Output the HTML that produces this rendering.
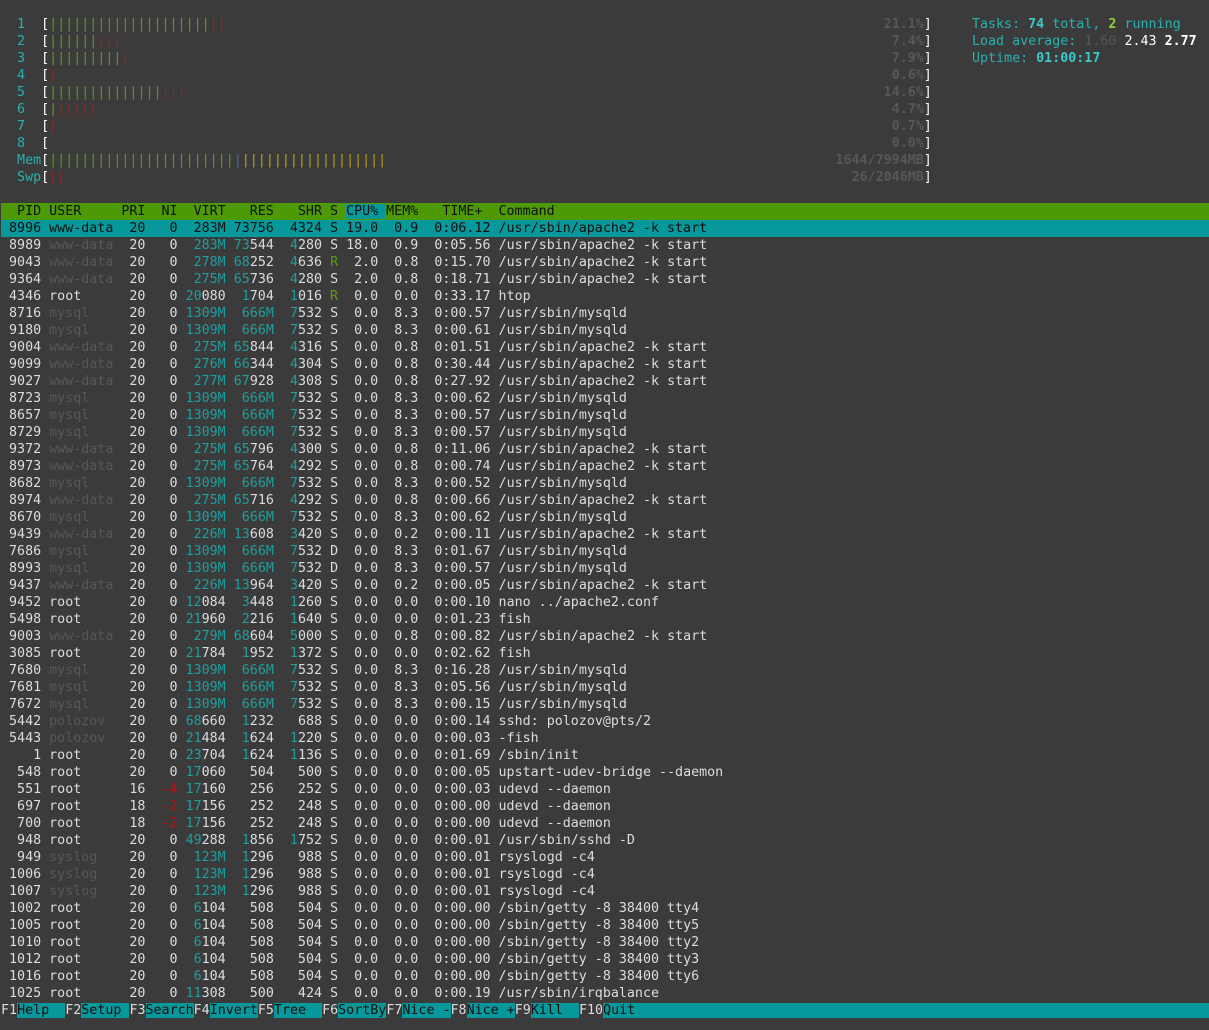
<!DOCTYPE html>
<html><head><meta charset="utf-8">
<style>
html,body{margin:0;padding:0;background:#3b3b3b;width:1209px;height:1030px;overflow:hidden}
#t{position:absolute;left:1px;top:16px;font-family:"DejaVu Sans Mono","Liberation Mono",monospace;font-size:13.33px;line-height:17px;color:#dcdcdc;width:1208px;overflow:hidden}
.l{white-space:pre;height:17px;overflow:hidden}
.c{color:#1f9e9e}.d{color:#575757}.r{color:#c01010}.g{color:#5c9a12}.y{color:#b8a020}.b{color:#3a6ea8}
.w{color:#fff}.bw{color:#fff;font-weight:bold}
.bar{display:inline-block;width:109ch;position:relative;vertical-align:top}
.pct{position:absolute;right:0;top:0;color:#575757;font-weight:bold}
.hd{background:#4e9a06;color:#111;margin-left:-1px;padding-left:1px}
.hd .cp{background:#06989a}
.sel{background:#06989a;color:#111;margin-left:-1px;padding-left:1px}
.ft{margin-left:-1px;padding-left:1px}
.fk{background:#06989a;color:#111}
.ck{color:#2ab0b0}.ckb{color:#3cc8c8;font-weight:bold}.gb{color:#8ad234;font-weight:bold}
</style></head><body>
<div id="t">
<div class="l"><span class="ck">  1</span>  <span class="w">[</span><span class="bar"><span class="g">||||||||||||||||||||</span><span class="r">||</span><span class="pct">21.1%</span></span><span class="w">]</span>     <span class="ck">Tasks: </span><span class="ckb">74</span><span class="ck"> total, </span><span class="gb">2</span><span class="ck"> running</span></div>
<div class="l"><span class="ck">  2</span>  <span class="w">[</span><span class="bar"><span class="g">||||||</span><span class="r">|||</span><span class="pct">7.4%</span></span><span class="w">]</span>     <span class="ck">Load average: </span><span class="d">1.60</span> <span class="w">2.43</span> <span class="bw">2.77</span></div>
<div class="l"><span class="ck">  3</span>  <span class="w">[</span><span class="bar"><span class="g">|||||||||</span><span class="r">|</span><span class="pct">7.9%</span></span><span class="w">]</span>     <span class="ck">Uptime: </span><span class="ckb">01:00:17</span></div>
<div class="l"><span class="ck">  4</span>  <span class="w">[</span><span class="bar"><span class="r">|</span><span class="pct">0.6%</span></span><span class="w">]</span></div>
<div class="l"><span class="ck">  5</span>  <span class="w">[</span><span class="bar"><span class="g">||||||||||||||</span><span class="r">|||</span><span class="pct">14.6%</span></span><span class="w">]</span></div>
<div class="l"><span class="ck">  6</span>  <span class="w">[</span><span class="bar"><span class="g">|</span><span class="r">|||||</span><span class="pct">4.7%</span></span><span class="w">]</span></div>
<div class="l"><span class="ck">  7</span>  <span class="w">[</span><span class="bar"><span class="r">|</span><span class="pct">0.7%</span></span><span class="w">]</span></div>
<div class="l"><span class="ck">  8</span>  <span class="w">[</span><span class="bar"><span class="pct">0.0%</span></span><span class="w">]</span></div>
<div class="l"><span class="ck">  Mem</span><span class="w">[</span><span class="bar"><span class="g">|||||||||||||||||||||||</span><span class="b">|</span><span class="y">||||||||||||||||||</span><span class="pct">1644/7994MB</span></span><span class="w">]</span></div>
<div class="l"><span class="ck">  Swp</span><span class="w">[</span><span class="bar"><span class="r">||</span><span class="pct">26/2046MB</span></span><span class="w">]</span></div>
<div class="l"> </div>
<div class="l hd">  PID USER     PRI  NI  VIRT   RES   SHR S <span class="cp">CPU% </span>MEM%   TIME+  Command</div>
<div class="l sel"> 8996 www-data  20   0  283M 73756  4324 S 19.0  0.9  0:06.12 /usr/sbin/apache2 -k start                                                                                                          </div>
<div class="l"> 8989 <span class="d">www-data</span>  20   0  <span class="c">283M</span> <span class="c">73</span>544  <span class="c">4</span>280 S 18.0  0.9  0:05.56 /usr/sbin/apache2 -k start</div>
<div class="l"> 9043 <span class="d">www-data</span>  20   0  <span class="c">278M</span> <span class="c">68</span>252  <span class="c">4</span>636 <span class="g">R</span>  2.0  0.8  0:15.70 /usr/sbin/apache2 -k start</div>
<div class="l"> 9364 <span class="d">www-data</span>  20   0  <span class="c">275M</span> <span class="c">65</span>736  <span class="c">4</span>280 S  2.0  0.8  0:18.71 /usr/sbin/apache2 -k start</div>
<div class="l"> 4346 root      20   0 <span class="c">20</span>080  <span class="c">1</span>704  <span class="c">1</span>016 <span class="g">R</span>  0.0  0.0  0:33.17 htop</div>
<div class="l"> 8716 <span class="d">mysql</span>     20   0 <span class="c">1309M</span>  <span class="c">666M</span>  <span class="c">7</span>532 S  0.0  8.3  0:00.57 /usr/sbin/mysqld</div>
<div class="l"> 9180 <span class="d">mysql</span>     20   0 <span class="c">1309M</span>  <span class="c">666M</span>  <span class="c">7</span>532 S  0.0  8.3  0:00.61 /usr/sbin/mysqld</div>
<div class="l"> 9004 <span class="d">www-data</span>  20   0  <span class="c">275M</span> <span class="c">65</span>844  <span class="c">4</span>316 S  0.0  0.8  0:01.51 /usr/sbin/apache2 -k start</div>
<div class="l"> 9099 <span class="d">www-data</span>  20   0  <span class="c">276M</span> <span class="c">66</span>344  <span class="c">4</span>304 S  0.0  0.8  0:30.44 /usr/sbin/apache2 -k start</div>
<div class="l"> 9027 <span class="d">www-data</span>  20   0  <span class="c">277M</span> <span class="c">67</span>928  <span class="c">4</span>308 S  0.0  0.8  0:27.92 /usr/sbin/apache2 -k start</div>
<div class="l"> 8723 <span class="d">mysql</span>     20   0 <span class="c">1309M</span>  <span class="c">666M</span>  <span class="c">7</span>532 S  0.0  8.3  0:00.62 /usr/sbin/mysqld</div>
<div class="l"> 8657 <span class="d">mysql</span>     20   0 <span class="c">1309M</span>  <span class="c">666M</span>  <span class="c">7</span>532 S  0.0  8.3  0:00.57 /usr/sbin/mysqld</div>
<div class="l"> 8729 <span class="d">mysql</span>     20   0 <span class="c">1309M</span>  <span class="c">666M</span>  <span class="c">7</span>532 S  0.0  8.3  0:00.57 /usr/sbin/mysqld</div>
<div class="l"> 9372 <span class="d">www-data</span>  20   0  <span class="c">275M</span> <span class="c">65</span>796  <span class="c">4</span>300 S  0.0  0.8  0:11.06 /usr/sbin/apache2 -k start</div>
<div class="l"> 8973 <span class="d">www-data</span>  20   0  <span class="c">275M</span> <span class="c">65</span>764  <span class="c">4</span>292 S  0.0  0.8  0:00.74 /usr/sbin/apache2 -k start</div>
<div class="l"> 8682 <span class="d">mysql</span>     20   0 <span class="c">1309M</span>  <span class="c">666M</span>  <span class="c">7</span>532 S  0.0  8.3  0:00.52 /usr/sbin/mysqld</div>
<div class="l"> 8974 <span class="d">www-data</span>  20   0  <span class="c">275M</span> <span class="c">65</span>716  <span class="c">4</span>292 S  0.0  0.8  0:00.66 /usr/sbin/apache2 -k start</div>
<div class="l"> 8670 <span class="d">mysql</span>     20   0 <span class="c">1309M</span>  <span class="c">666M</span>  <span class="c">7</span>532 S  0.0  8.3  0:00.62 /usr/sbin/mysqld</div>
<div class="l"> 9439 <span class="d">www-data</span>  20   0  <span class="c">226M</span> <span class="c">13</span>608  <span class="c">3</span>420 S  0.0  0.2  0:00.11 /usr/sbin/apache2 -k start</div>
<div class="l"> 7686 <span class="d">mysql</span>     20   0 <span class="c">1309M</span>  <span class="c">666M</span>  <span class="c">7</span>532 D  0.0  8.3  0:01.67 /usr/sbin/mysqld</div>
<div class="l"> 8993 <span class="d">mysql</span>     20   0 <span class="c">1309M</span>  <span class="c">666M</span>  <span class="c">7</span>532 D  0.0  8.3  0:00.57 /usr/sbin/mysqld</div>
<div class="l"> 9437 <span class="d">www-data</span>  20   0  <span class="c">226M</span> <span class="c">13</span>964  <span class="c">3</span>420 S  0.0  0.2  0:00.05 /usr/sbin/apache2 -k start</div>
<div class="l"> 9452 root      20   0 <span class="c">12</span>084  <span class="c">3</span>448  <span class="c">1</span>260 S  0.0  0.0  0:00.10 nano ../apache2.conf</div>
<div class="l"> 5498 root      20   0 <span class="c">21</span>960  <span class="c">2</span>216  <span class="c">1</span>640 S  0.0  0.0  0:01.23 fish</div>
<div class="l"> 9003 <span class="d">www-data</span>  20   0  <span class="c">279M</span> <span class="c">68</span>604  <span class="c">5</span>000 S  0.0  0.8  0:00.82 /usr/sbin/apache2 -k start</div>
<div class="l"> 3085 root      20   0 <span class="c">21</span>784  <span class="c">1</span>952  <span class="c">1</span>372 S  0.0  0.0  0:02.62 fish</div>
<div class="l"> 7680 <span class="d">mysql</span>     20   0 <span class="c">1309M</span>  <span class="c">666M</span>  <span class="c">7</span>532 S  0.0  8.3  0:16.28 /usr/sbin/mysqld</div>
<div class="l"> 7681 <span class="d">mysql</span>     20   0 <span class="c">1309M</span>  <span class="c">666M</span>  <span class="c">7</span>532 S  0.0  8.3  0:05.56 /usr/sbin/mysqld</div>
<div class="l"> 7672 <span class="d">mysql</span>     20   0 <span class="c">1309M</span>  <span class="c">666M</span>  <span class="c">7</span>532 S  0.0  8.3  0:00.15 /usr/sbin/mysqld</div>
<div class="l"> 5442 <span class="d">polozov</span>   20   0 <span class="c">68</span>660  <span class="c">1</span>232   688 S  0.0  0.0  0:00.14 sshd: polozov@pts/2</div>
<div class="l"> 5443 <span class="d">polozov</span>   20   0 <span class="c">21</span>484  <span class="c">1</span>624  <span class="c">1</span>220 S  0.0  0.0  0:00.03 -fish</div>
<div class="l">    1 root      20   0 <span class="c">23</span>704  <span class="c">1</span>624  <span class="c">1</span>136 S  0.0  0.0  0:01.69 /sbin/init</div>
<div class="l">  548 root      20   0 <span class="c">17</span>060   504   500 S  0.0  0.0  0:00.05 upstart-udev-bridge --daemon</div>
<div class="l">  551 root      16  <span class="r">-4</span> <span class="c">17</span>160   256   252 S  0.0  0.0  0:00.03 udevd --daemon</div>
<div class="l">  697 root      18  <span class="r">-2</span> <span class="c">17</span>156   252   248 S  0.0  0.0  0:00.00 udevd --daemon</div>
<div class="l">  700 root      18  <span class="r">-2</span> <span class="c">17</span>156   252   248 S  0.0  0.0  0:00.00 udevd --daemon</div>
<div class="l">  948 root      20   0 <span class="c">49</span>288  <span class="c">1</span>856  <span class="c">1</span>752 S  0.0  0.0  0:00.01 /usr/sbin/sshd -D</div>
<div class="l">  949 <span class="d">syslog</span>    20   0  <span class="c">123M</span>  <span class="c">1</span>296   988 S  0.0  0.0  0:00.01 rsyslogd -c4</div>
<div class="l"> 1006 <span class="d">syslog</span>    20   0  <span class="c">123M</span>  <span class="c">1</span>296   988 S  0.0  0.0  0:00.01 rsyslogd -c4</div>
<div class="l"> 1007 <span class="d">syslog</span>    20   0  <span class="c">123M</span>  <span class="c">1</span>296   988 S  0.0  0.0  0:00.01 rsyslogd -c4</div>
<div class="l"> 1002 root      20   0  <span class="c">6</span>104   508   504 S  0.0  0.0  0:00.00 /sbin/getty -8 38400 tty4</div>
<div class="l"> 1005 root      20   0  <span class="c">6</span>104   508   504 S  0.0  0.0  0:00.00 /sbin/getty -8 38400 tty5</div>
<div class="l"> 1010 root      20   0  <span class="c">6</span>104   508   504 S  0.0  0.0  0:00.00 /sbin/getty -8 38400 tty2</div>
<div class="l"> 1012 root      20   0  <span class="c">6</span>104   508   504 S  0.0  0.0  0:00.00 /sbin/getty -8 38400 tty3</div>
<div class="l"> 1016 root      20   0  <span class="c">6</span>104   508   504 S  0.0  0.0  0:00.00 /sbin/getty -8 38400 tty6</div>
<div class="l"> 1025 root      20   0 <span class="c">11</span>308   500   424 S  0.0  0.0  0:00.19 /usr/sbin/irqbalance</div>
<div class="l ft">F1<span class="fk">Help  </span>F2<span class="fk">Setup </span>F3<span class="fk">Search</span>F4<span class="fk">Invert</span>F5<span class="fk">Tree  </span>F6<span class="fk">SortBy</span>F7<span class="fk">Nice -</span>F8<span class="fk">Nice +</span>F9<span class="fk">Kill  </span>F10<span class="fk">Quit                                                                                                      </span></div>
</div>
</body></html>
